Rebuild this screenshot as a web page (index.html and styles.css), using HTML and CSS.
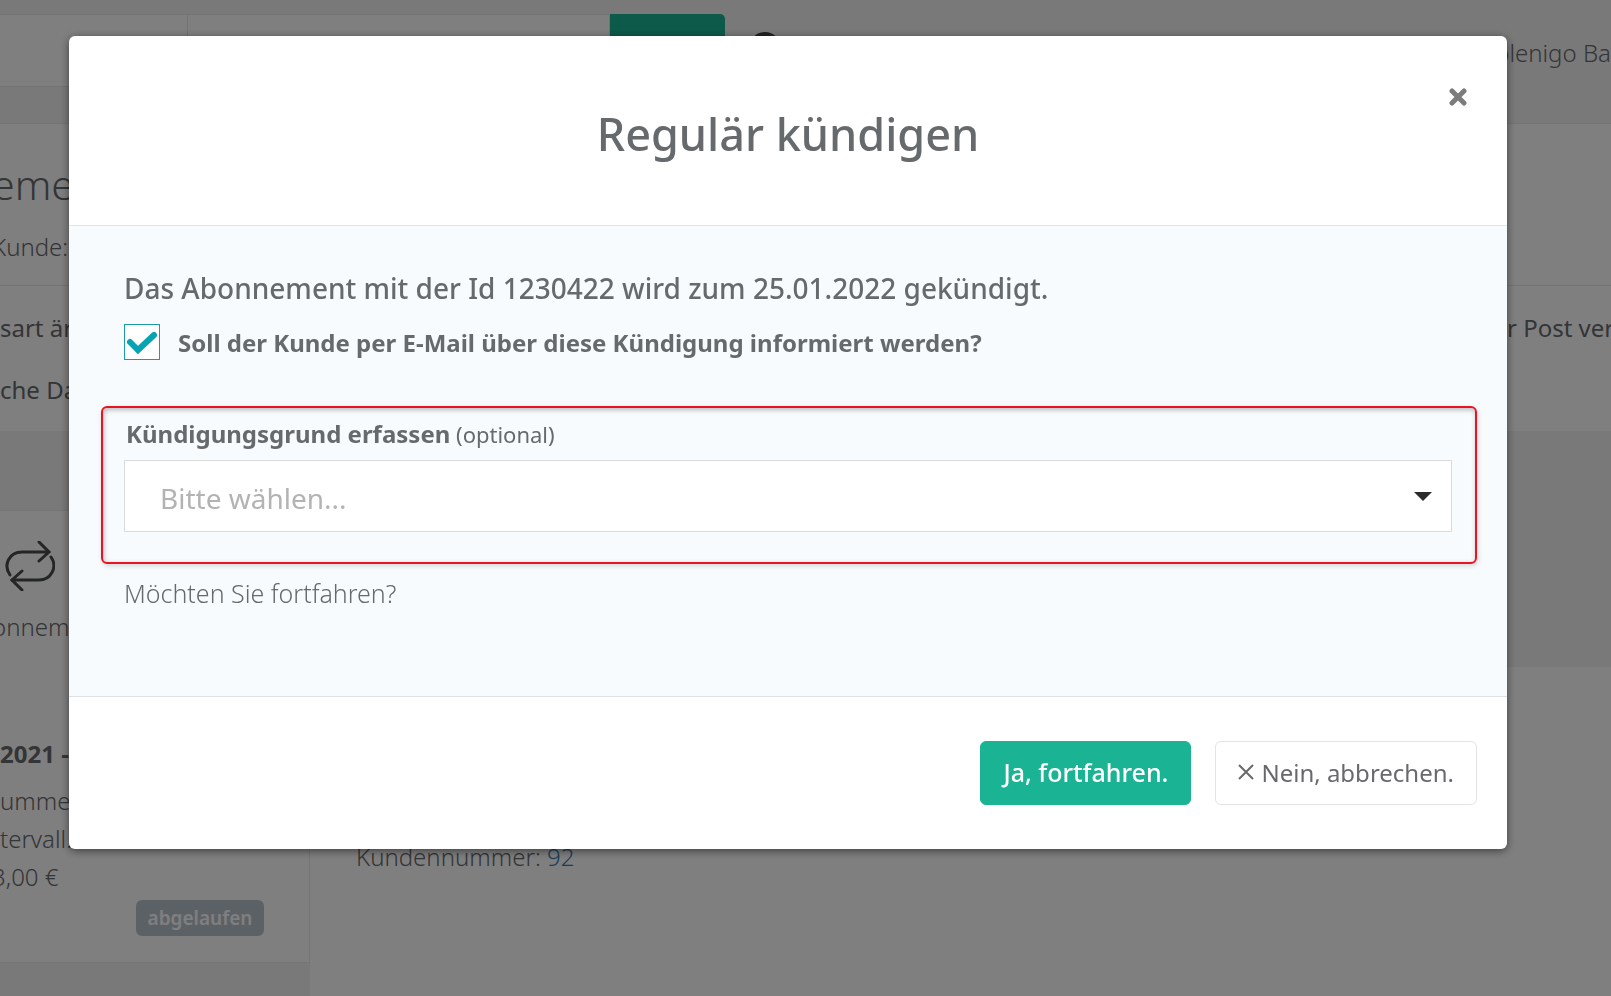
FILE: index.html
```html
<!DOCTYPE html>
<html lang="de">
<head>
  <meta charset="UTF-8" />
  <meta name="viewport" content="width=device-width, initial-scale=1" />
  <title>Regulär kündigen</title>
  <link rel="stylesheet" href="styles.css">
</head>
<body>
  <div class="page">
    <header class="topbar">
      <form class="search-group">
        <input type="text" class="search-type" aria-label="Suchtyp" />
        <input type="text" class="search-text" aria-label="Suche" />
        <button type="button" class="search-btn" aria-label="Suchen"></button>
      </form>
      <svg class="help-icon" viewBox="0 0 32 32" aria-hidden="true">
        <circle cx="16" cy="16" r="14" />
      </svg>
      <span class="account">plenigo Ba</span>
    </header>

    <section class="heading">
      <div class="heading-title">
        <h2 class="cut">eme</h2>
        <p class="cut">Kunde:</p>
      </div>
      <div class="actions">
        <a href="#">sart är</a>
        <a href="#" class="actions-last">r Post ver</a>
      </div>
      <div class="actions">
        <a href="#">che Da</a>
      </div>
    </section>

    <div class="columns">
      <aside class="card">
        <svg class="repeat-icon" viewBox="0 0 50 50" aria-hidden="true">
          <path d="M5 34 C-2 24 4 11 17 11 H43" />
          <path d="M34 1 L44 11 L34 20" />
          <path d="M46 16 C53 26 46 39 34 39 H7" />
          <path d="M17 30 L7 39 L17 49" />
        </svg>
        <p class="card-name cut">onneme</p>
        <p class="card-date">2021 -</p>
        <p class="card-line">ummer</p>
        <p class="card-line">tervall.</p>
        <p class="card-line cut">3,00 €</p>
        <span class="badge">abgelaufen</span>
      </aside>
      <main class="details">
        <p>Kundennummer: <a href="#">92</a></p>
      </main>
    </div>
  </div>

  <!-- Modal -->
  <div class="backdrop">
    <div class="modal" role="dialog" aria-modal="true" aria-labelledby="modalTitle">
      <div class="modal-header">
        <h1 id="modalTitle">Regulär kündigen</h1>
        <button type="button" class="modal-close" aria-label="Schließen">
          <svg viewBox="0 0 18 18"><path d="M3 3 L15 15 M15 3 L3 15" /></svg>
        </button>
      </div>

      <div class="modal-body">
        <p class="modal-message">Das Abonnement mit der Id 1230422 wird zum 25.01.2022 gekündigt.</p>
        <div class="check-row">
          <span class="check-box">
            <input type="checkbox" id="informCustomer" checked />
            <svg viewBox="0 0 36 36" aria-hidden="true"><path d="M6 18 L14 26 L30 11" /></svg>
          </span>
          <label for="informCustomer">Soll der Kunde per E-Mail über diese Kündigung informiert werden?</label>
        </div>

        <div class="reason">
          <label for="reason"><strong>Kündigungsgrund erfassen</strong> (optional)</label>
          <div class="select-wrap">
            <select id="reason">
              <option>Bitte wählen...</option>
            </select>
            <svg viewBox="0 0 18 9" aria-hidden="true"><path d="M0 0 H18 L9 9 Z" /></svg>
          </div>
        </div>

        <p class="modal-question">Möchten Sie fortfahren?</p>
      </div>

      <div class="modal-footer">
        <button type="button" class="btn btn-primary">Ja, fortfahren.</button>
        <button type="button" class="btn btn-white">
          <svg viewBox="0 0 16 16" aria-hidden="true"><path d="M1 1 L15 15 M15 1 L1 15" /></svg>
          Nein, abbrechen.
        </button>
      </div>
    </div>
  </div>
</body>
</html>
```
FILE: styles.css
```css
* {
  box-sizing: border-box;
}

body {
  margin: 0;
  font-family: "Noto Sans", "Open Sans", sans-serif;
  font-size: 24px;
  line-height: 36px;
  font-weight: 300;
  color: #676a6c;
  background: #f3f3f4;
}

h1, h2, p {
  margin: 0;
}

button, input, select {
  font-family: inherit;
  border-radius: 0;
}

/* Page behind the modal */
.page {
  display: flex;
  flex-direction: column;
  min-height: 100vh;
  overflow: hidden;
  white-space: nowrap;
}

.cut {
  margin-left: -8px;
}

.topbar {
  display: flex;
  height: 124px;
  padding-top: 14px;
  border-bottom: 1px solid #e7eaec;
}

.search-group {
  display: flex;
  width: 725px;
  height: 73px;
}
.search-type,
.search-text {
  min-width: 0;
  border: 1px solid #e5e6e7;
  border-left: 0;
  background: #fff;
}
.search-type {
  width: 188px;
}
.search-text {
  flex: 1;
}
.search-btn {
  width: 115px;
  border: 0;
  border-radius: 0 5px 5px 0;
  background: #1ab394;
}

.help-icon {
  width: 32px;
  height: 32px;
  margin: 18px 0 0 24px;
  fill: none;
  stroke: #444;
  stroke-width: 4;
}

.account {
  width: 116px;
  margin: 21px 0 0 auto;
}

.heading {
  height: 307px;
  background: #fff;
}
.heading-title {
  height: 162px;
  padding-top: 30px;
  border-bottom: 1px solid #e7eaec;
}
.heading-title h2 {
  font-size: 41px;
  line-height: 60px;
  font-weight: 300;
}
.heading-title p {
  margin-top: 15px;
}

.actions {
  display: flex;
  justify-content: space-between;
  padding-top: 22px;
  line-height: 40px;
}
.actions a {
  color: #676a6c;
  font-weight: 400;
  text-decoration: none;
}
.actions-last {
  width: 104px;
}

.columns {
  display: grid;
  grid-template-columns: 310px 1fr;
  flex: 1;
}

.card {
  align-self: start;
  margin-top: 79px;
  padding: 30px 0 26px;
  border: 1px solid #e7eaec;
  border-left: 0;
  background: #fff;
}
.repeat-icon {
  display: block;
  width: 50px;
  height: 50px;
  margin-left: 5px;
  fill: none;
  stroke: #484a4b;
  stroke-width: 3;
  stroke-linecap: round;
}
.card-name {
  margin-top: 18px;
}
.card-date {
  margin: 91px 0 10px;
  font-weight: 700;
}
.card-line {
  line-height: 38px;
}
.badge {
  display: block;
  width: 128px;
  margin: 4px 0 0 136px;
  border-radius: 6px;
  background: #b9c3cd;
  color: #fff;
  font-size: 19px;
  font-weight: 600;
  text-align: center;
}

.details {
  margin-top: 236px;
  padding: 172px 0 0 46px;
  background: #fff;
}
.details a {
  color: #337ab7;
  text-decoration: none;
}

/* Modal */
.backdrop {
  position: fixed;
  top: 0; left: 0; right: 0; bottom: 0;
  padding: 36px 104px 36px 69px;
  background: rgba(0,0,0,0.5);
  overflow: hidden;
}

.modal {
  border-radius: 6px;
  background: #fff;
  box-shadow: 0 2px 8px rgba(0,0,0,0.5);
}

.modal-header {
  position: relative;
  padding: 66px 30px 59px;
  border-bottom: 1px solid #dfe5e8;
  text-align: center;
}
.modal-header h1 {
  font-size: 45px;
  line-height: 64px;
  font-weight: 500;
}
.modal-close {
  position: absolute;
  top: 52px;
  right: 40px;
  width: 18px;
  height: 18px;
  padding: 0;
  border: 0;
  background: none;
}
.modal-close svg {
  display: block;
  width: 18px;
  height: 18px;
  stroke: #7c7c7c;
  stroke-width: 5;
  stroke-linecap: round;
}

.modal-body {
  padding: 42px 55px 85px;
  background: #f7fbfe;
}
.modal-message {
  font-size: 28px;
  line-height: 40px;
  font-weight: 500;
}

.check-row {
  display: flex;
  gap: 18px;
  margin-top: 16px;
  line-height: 38px;
  height: 36px;
  font-weight: 700;
}
.check-box {
  position: relative;
  width: 36px;
  height: 36px;
}
.check-box input {
  display: block;
  width: 36px;
  height: 36px;
  margin: 0;
  appearance: none;
  border: 1px solid #1c9ba6;
  background: #fff;
}
.check-box svg {
  position: absolute;
  top: 0;
  left: 0;
  fill: none;
  stroke: #08a3b3;
  stroke-width: 6;
  stroke-linecap: round;
  pointer-events: none;
}

/* Highlighted group */
.reason {
  margin: 46px -25px 0 -23px;
  padding: 8px 23px 30px 21px;
  border: 2px solid #ea1420;
  border-radius: 6px;
  box-shadow: 1px 2px 5px rgba(0,0,0,0.15), inset 1px 2px 5px rgba(0,0,0,0.25);
}
.reason label {
  display: block;
  padding-left: 2px;
  font-size: 22px;
  font-weight: 400;
}
.reason strong {
  font-size: 24px;
  font-weight: 700;
}
.select-wrap {
  position: relative;
  margin-top: 8px;
}
.select-wrap select {
  display: block;
  width: 100%;
  height: 72px;
  padding: 4px 35px 0;
  appearance: none;
  border: 1px solid #d9dcde;
  background: #fff;
  color: #b3b3b3;
  font-size: 28px;
  font-weight: 400;
}
.select-wrap svg {
  position: absolute;
  top: 32px;
  right: 20px;
  width: 18px;
  height: 9px;
  fill: #2b2b2b;
  pointer-events: none;
}

.modal-question {
  margin-top: 11px;
  font-size: 25px;
}

.modal-footer {
  display: flex;
  justify-content: flex-end;
  gap: 24px;
  padding: 44px 30px;
  border-top: 1px solid #dfe2e4;
}
.btn {
  display: flex;
  align-items: center;
  gap: 7px;
  height: 64px;
  padding: 0 22px 2px;
  border: 1px solid #1ab394;
  border-radius: 6px;
  font-size: 24px;
}
.btn-primary {
  background: #1ab394;
  color: #fff;
  font-size: 25px;
  font-weight: 500;
}
.btn-white {
  border-color: #e2e3e4;
  background: #fff;
  color: #676a6c;
  font-weight: 400;
}
.btn svg {
  width: 16px;
  height: 16px;
  stroke: #676a6c;
  stroke-width: 2;
}
```
